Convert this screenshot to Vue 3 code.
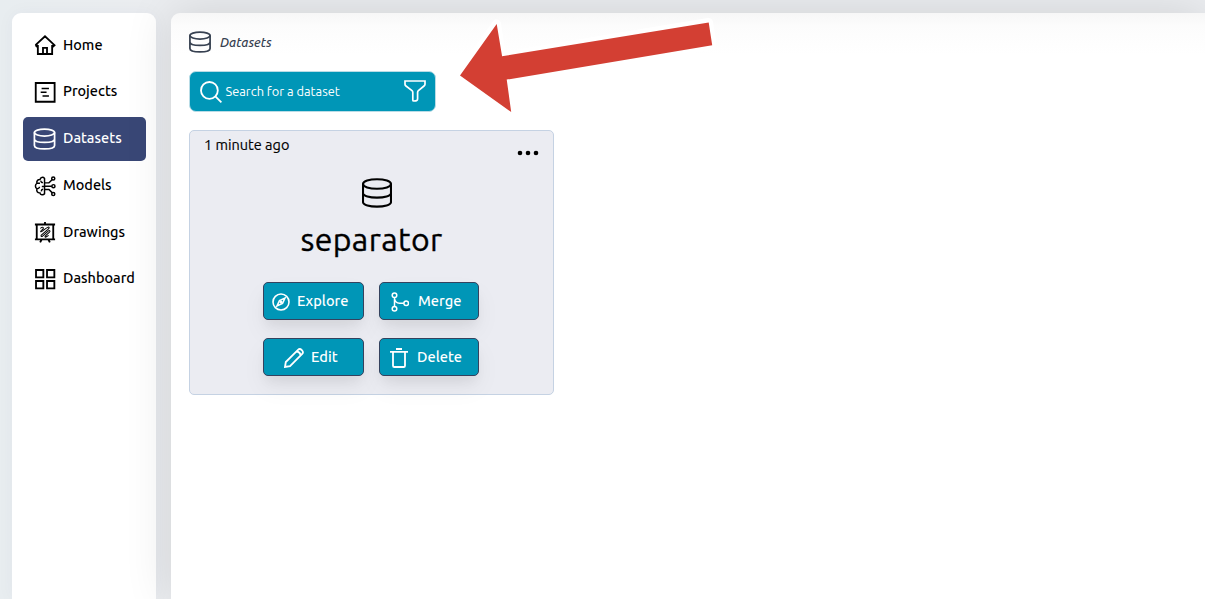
<script setup>
const nav = [
  { label: 'Home', icon: 'home' },
  { label: 'Projects', icon: 'projects' },
  { label: 'Datasets', icon: 'datasets', active: true },
  { label: 'Models', icon: 'models' },
  { label: 'Drawings', icon: 'drawings' },
  { label: 'Dashboard', icon: 'dashboard' },
]
</script>

<template>
  <div class="page">
    <aside class="sidebar">
      <nav>
        <a v-for="item in nav" :key="item.label" class="nav-item" :class="[item.icon, { active: item.active }]">
          <svg v-if="item.icon === 'home'" viewBox="0 0 24 24" class="nav-icon">
            <path d="M1.600 12.200 12 2.500l10.400 9.700-1.200 1.200-1.600-1.300M1.600 12.200l1.200 1.200 1.600-1.300M4.200 12v9.800h15.600V12M9.800 21.500v-6.400h4.400v6.400" />
          </svg>
          <svg v-else-if="item.icon === 'projects'" viewBox="0 0 24 24" class="nav-icon">
            <path d="M1.900 2.200h20.600v20.400H1.900z" /><path class="lines" d="M8.300 8.200h8M7.300 12.300h6.400M9.300 16.400h7" />
          </svg>
          <svg v-else-if="item.icon === 'datasets'" viewBox="0 0 24 24" class="nav-icon database">
            <ellipse cx="12" cy="5" rx="11" ry="3.800" />
            <path d="M1 5v14c0 5 22 5 22 0V5M1 12c0 5 22 5 22 0" />
          </svg>
          <svg v-else-if="item.icon === 'models'" viewBox="0 0 24 24" class="nav-icon thin">
            <path d="M11.500 3.800C10 1.700 6.700 2.400 6.600 5 3.800 4.800 2.500 7.200 3.200 9c-2.200 1.500-2.200 4.500 0 6-.8 2.500.7 4.700 3.200 4.500.5 2.400 3.700 2.800 5.100.9zM3.500 9h3M7.500 6.200c0 1.800 1.400 2.300 2.300 2M3.300 15c1 0 2.700-.8 2.700-2.300M8.500 12.500h3M8.200 17.800c-.3-1.500.6-2.400 1.800-2.400M11.500 8.600h4.800L20 5M11.500 12.200h8M11.500 15.800h4.800L20 19.500" />
            <circle cx="21" cy="3.800" r="1.700" /><circle cx="21.200" cy="12.200" r="1.700" /><circle cx="21" cy="20.800" r="1.700" />
          </svg>
          <svg v-else-if="item.icon === 'drawings'" viewBox="0 0 24 24" class="nav-icon">
            <path d="M1 3.800h22M1 20h22M3 3.800V20M21 3.800V20M12 1v2.800M8.200 20.500l-1.500 2.800M15.800 20.500l1.500 2.800" />
            <path class="scribble" d="M7 8.200C8.200 6 10.500 6.500 10.200 8.100S6.800 10.500 7.200 11.700c.6 1.200 7-5.200 8.600-5.200 1.500.3.400 1.700-.6 2.700L8 15.400c-.9 1.300.3 2 1.400 1l6.300-5.600c1.500-1 2.300.2 1.200 1.300l-4.500 4.100c-1 1.300.1 1.800 1.100 1l2.500-1.600" />
          </svg>
          <svg v-else viewBox="0 0 24 24" class="nav-icon">
            <path d="M2.200 2.200h8v8h-8zM14.200 2.200h8v8h-8zM2.200 14.200h8v8h-8zM14.200 14.200h8v8h-8z" />
          </svg>
          <span class="nav-label">{{ item.label }}</span>
        </a>
      </nav>
    </aside>

    <main class="content">
      <header class="heading">
        <svg viewBox="0 0 24 24" class="heading-icon">
          <ellipse cx="12" cy="5" rx="11" ry="3.800" />
          <path d="M1 5v14c0 5 22 5 22 0V5M1 12c0 5 22 5 22 0" />
        </svg>
        <span class="heading-label">Datasets</span>
      </header>

      <div class="search">
        <svg viewBox="0 0 22 22" class="search-icon">
          <circle cx="9.400" cy="9.400" r="8.400" /><path d="m15.400 15.400 6 5.900" />
        </svg>
        <span class="search-label">Search for a dataset</span>
        <svg viewBox="0 0 22 22" class="filter-icon">
          <path d="M1 1h20v3.200c0 .8-.4 1.300-1 1.800l-5.600 4.700c-.6.500-.8 1-.8 1.800v6.200c0 1.200-.8 2-2 2.100l-1.800.2c-.7 0-1-.3-1-1v-7.500c0-.8-.2-1.300-.8-1.800L2 6C1.300 5.500 1 5 1 4.200z" />
        </svg>
      </div>

      <section class="card">
        <div class="card-top">
          <span class="age">1 minute ago</span>
          <svg viewBox="0 0 22 6" class="dots">
            <circle cx="3" cy="3" r="2.300" /><circle cx="11" cy="3" r="2.300" /><circle cx="19" cy="3" r="2.300" />
          </svg>
        </div>
        <svg viewBox="0 0 30 30" class="card-icon">
          <ellipse cx="15" cy="6" rx="14" ry="4.800" />
          <path d="M1 6v18c0 6.200 28 6.200 28 0V6M1 15c0 6.200 28 6.200 28 0" />
        </svg>
        <h1 class="title">separator</h1>
        <div class="actions">
          <button class="action explore">
            <svg viewBox="0 0 18 18"><circle cx="9" cy="9" r="8" /><path d="m13 5-2.500 5.500L5 13l2.500-5.500z" /><circle cx="9" cy="9" r=".7" /></svg>
            <span>Explore</span>
          </button>
          <button class="action merge">
            <svg viewBox="0 0 18 20"><circle cx="3.500" cy="3.200" r="2.300" /><circle cx="3.500" cy="16.800" r="2.300" /><circle cx="15.200" cy="11.200" r="2.300" /><path d="M3.500 5.500v9M3.500 6.500c.5 3 2.200 4.700 5 4.700h4.400" /></svg>
            <span>Merge</span>
          </button>
          <button class="action edit">
            <svg viewBox="0 0 20 20"><path d="m1 19 .8-5L14 1.800c2.400-2.200 6.400 1.800 4.200 4.200L6 18.200zM12.300 3.500c2.600.2 4.200 1.800 4.200 4.200" /></svg>
            <span>Edit</span>
          </button>
          <button class="action delete">
            <svg viewBox="0 0 18 20"><path d="M0 3.800h18M6 1h6M3 4v13.700c0 .8.500 1.300 1.300 1.300h9.400c.8 0 1.300-.5 1.300-1.300V4" /></svg>
            <span>Delete</span>
          </button>
        </div>
      </section>
    </main>

    <svg class="arrow" viewBox="0 0 270 104">
      <path class="halo" d="M10 65.500 46.500 14l5.200 32.500 206.800-34 3.500 22.800L56.700 69.500 61 102z" />
      <path class="body" d="M10 65.500 46.700 14l5.400 32.300 206.600-33.900 3.500 22.900L56.700 69.600 61.200 102z" />
    </svg>
  </div>
</template>

<style>
body { margin: 0; overflow: hidden; }
</style>

<style scoped>
.page {
  position: relative;
  box-sizing: border-box;
  display: flex;
  gap: 15px;
  width: 100vw;
  height: 100vh;
  padding: 13px 0 0 12px;
  overflow: hidden;
  background: linear-gradient(90deg, #e8edf0, #ebedf0 170px);
  color: #000;
  font-family: Ubuntu, "Noto Sans", sans-serif;
}
svg { display: block; flex: none; fill: none; stroke: currentColor; }
.sidebar {
  box-sizing: border-box;
  width: 144px;
  padding: 10.300px 10px 0 11px;
  border-radius: 9px 9px 0 0;
  background: #fff;
  box-shadow: 0 0 18px rgba(40, 40, 90, .04);
}
nav { display: flex; flex-direction: column; gap: 2.750px; }
.nav-item {
  box-sizing: border-box;
  display: flex;
  align-items: center;
  gap: 7px;
  height: 44px;
  padding-left: 11px;
  border-radius: 5px;
  font-size: 14.500px;
  font-weight: 500;
}
.nav-item.active { padding-left: 10px; background: #394776; color: #fff; }
.nav-icon { width: 22px; height: 22px; stroke-width: 2; }
.nav-icon.thin { stroke-width: 1.600; }
.nav-icon.database { width: 23px; stroke-width: 1.900; }
.lines { stroke-width: 1.600; }
.scribble { stroke-width: 1.100; }
.nav-label { position: relative; top: -1.250px; white-space: nowrap; }
.content {
  position: relative;
  flex: 1;
  box-sizing: border-box;
  padding: 17px 18px 0;
  border-radius: 9px 0 0 0;
  background: linear-gradient(#f7f7f7, #fcfcfc 13px, #fff 42px);
  box-shadow: 0 0 48px rgba(0, 0, 0, .12);
}
.heading { display: flex; align-items: center; gap: 9px; height: 24px; color: #374151; }
.heading-icon { width: 22px; height: 22px; stroke-width: 1.900; }
.heading-label { font-size: 12.800px; font-weight: 500; font-style: italic; }
.search {
  box-sizing: border-box;
  display: flex;
  align-items: center;
  width: 247px;
  height: 41px;
  margin-top: 17px;
  padding: 0 9px 0 9.500px;
  border: 1px solid #b9dce6;
  border-radius: 7px;
  background: #0096b7;
  color: #fff;
}
.search-icon { width: 22px; height: 22px; stroke-width: 1.800; }
.search-label { position: relative; top: -1px; margin-left: 4px; font-size: 12.800px; white-space: nowrap; }
.filter-icon { width: 22px; height: 22px; margin: -2px 0 0 auto; stroke-width: 1.700; }
.card {
  box-sizing: border-box;
  width: 365px;
  height: 265px;
  margin-top: 18px;
  border: 1px solid #c5d2e3;
  border-radius: 5px;
  background: #ebecf2;
}
.card-top { display: flex; justify-content: space-between; height: 46.500px; padding: 4px 14px 0; box-sizing: border-box; }
.age { font-size: 14.500px; line-height: 20px; -webkit-text-stroke: .15px #000; }
.dots { width: 22px; height: 6px; margin-top: 15px; fill: #000; stroke: none; }
.card-icon { width: 30px; height: 30px; margin-left: 172px; stroke-width: 2.100; }
.title { margin: 7.500px 0 0; font-size: 32px; letter-spacing: .4px; line-height: 48px; font-weight: 400; text-align: center; -webkit-text-stroke: .35px #000; }
.actions { display: grid; grid-template-columns: 101px 100px; gap: 18px 15px; margin: 19px 0 0 73px; }
.action {
  display: flex;
  align-items: center;
  box-sizing: border-box;
  height: 38px;
  padding: 0;
  border: 1px solid #35425e;
  border-radius: 5px;
  background: #0096b7;
  box-shadow: 0 8px 12px -3px rgba(0, 0, 0, .06), 0 12px 24px rgba(0, 0, 0, .05);
  color: #fff;
  font-family: inherit;
  font-size: 14.600px;
  font-weight: 500;
}
.explore svg { width: 18px; height: 18px; margin: 1px 7px 0 8px; stroke-width: 1.600; }
.merge svg { width: 18px; height: 20px; margin: 1px 9px 0 11px; stroke-width: 1.500; }
.edit svg { width: 20px; height: 20px; margin: 1px 7px 0 20px; stroke-width: 1.800; }
.delete svg { width: 18px; height: 20px; margin: 1px 9px 0 10px; stroke-width: 1.800; }
.action span { position: relative; top: -.5px; }
.arrow { position: absolute; left: 450px; top: 10px; width: 270px; height: 104px; }
.arrow .halo { fill: #fff; stroke: #fff; stroke-width: 9; stroke-linejoin: round; }
.arrow .body { fill: #d33f33; stroke: none; }
</style>
